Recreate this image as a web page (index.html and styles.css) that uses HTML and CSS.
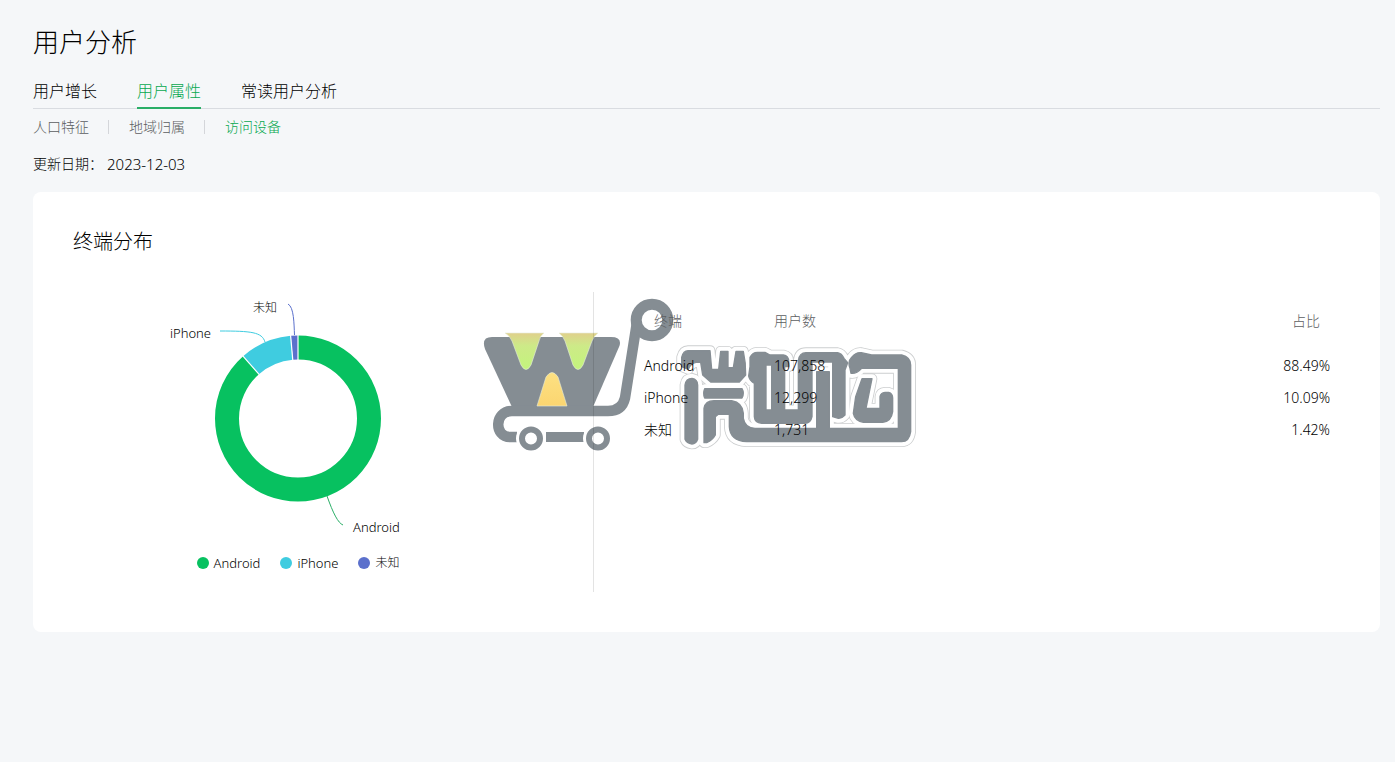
FILE: index.html
```
<!DOCTYPE html>
<html lang="zh-CN">
<head>
<meta charset="utf-8">
<title>用户分析</title>
<link rel="stylesheet" href="styles.css">
</head>
<body>
<main class="page">
  <h1 class="page-title">用户分析</h1>
  <nav class="tabs">
    <a class="tab" href="#growth">用户增长</a>
    <a class="tab tab-active" href="#attributes">用户属性</a>
    <a class="tab" href="#readers">常读用户分析</a>
  </nav>
  <nav class="subtabs">
    <a class="subtab" href="#people">人口特征</a>
    <a class="subtab" href="#region">地域归属</a>
    <a class="subtab subtab-active" href="#device">访问设备</a>
  </nav>
  <p class="updated"><span>更新日期：</span><time class="date" datetime="2023-12-03">2023-12-03</time></p>

  <section class="card">
    <h2 class="card-title">终端分布</h2>
    <div class="card-body">
      <svg class="watermark" viewBox="480 290 440 170" aria-hidden="true">
        <defs>
          <linearGradient id="lime" x1="0" y1="0" x2="0" y2="1">
            <stop offset="0" stop-color="#e0d08c"/><stop offset=".35" stop-color="#cdea88"/><stop offset="1" stop-color="#c3f47c"/>
          </linearGradient>
          <linearGradient id="amber" x1="0" y1="0" x2="0" y2="1">
            <stop offset="0" stop-color="#fde182"/><stop offset="1" stop-color="#fbd571"/>
          </linearGradient>
          <g id="mark" stroke-linejoin="round">
            <path d="M65 200V172Q70 152 84 152H150L155 208H176L182 154H204V203H220L228 154H250Q258 190 257 225L238 246H152L128 225L122 187H108Q92 190 85 208Z"/>
            <path d="M134 266H246Q254 280 246 294H134Q128 280 134 266Z"/>
            <path d="M75 255Q78 235 96 235Q113 238 113 255V418Q108 432 96 432Q80 430 75 418Z"/>
            <path fill-rule="evenodd" d="M132 428V325Q136 302 162 302H215Q248 308 250 340V355Q255 384 285 385H470V215H508V385H715V205H605Q590 222 573 220L570 205Q562 185 575 172Q588 156 604 158L635 165H725Q752 172 752 195V395Q748 425 725 425H260Q210 422 208 380V343H175L166 350V405Q158 420 140 428Z"/>
            <path fill-rule="evenodd" d="M270 200V172Q278 157 292 157H315L330 165H370Q386 168 386 184V200H374V330H415V182Q418 158 438 158H533Q545 160 552 175L563 188L555 210V345Q545 356 535 355L518 350V186H456V350Q452 370 435 370H305Q284 368 283 350V250Q268 242 266 228Z M318 195H335V330H318Z"/>
            <path d="M606 236H636L618 325H660V290Q662 278 675 277H686Q698 280 698 294V335Q694 365 668 367H610Q584 362 580 340L587 290Z"/>
          </g>
        </defs>
        <g fill="#858d93">
          <path d="M492 337H611Q623 337 619 347L593 407H512L485 349Q481 337 492 337Z"/>
          <path d="M637 322L625 398Q622 411 608 411H512C494 411 494 437 510 437H517" fill="none" stroke="#858d93" stroke-width="10.5"/>
          <circle cx="652" cy="320" r="15.8" fill="#fff" stroke="#858d93" stroke-width="11"/>
          <path d="M546 432H584V442H546Z"/>
          <circle cx="531" cy="438.5" r="15" fill="#fff"/>
          <circle cx="598" cy="438.5" r="15" fill="#fff"/>
          <circle cx="531" cy="438.5" r="9" fill="#fff" stroke="#858d93" stroke-width="6"/>
          <circle cx="598" cy="438.5" r="9" fill="#fff" stroke="#858d93" stroke-width="6"/>
        </g>
        <g stroke="#e6ecdc" stroke-width=".6">
          <path d="M505 333H544Q540 336 539 341L531 365Q526 374 521 365L512 341Q510 336 505 333Z" fill="url(#lime)"/>
          <path d="M559 333H598Q594 336 592 341L583 365Q578 374 573 365L565 341Q563 336 559 333Z" fill="url(#lime)"/>
          <path d="M537 406L546 377Q552 368 558 377L567 406Z" fill="url(#amber)"/>
        </g>
        <g transform="translate(660 300) scale(.33333)">
          <use href="#mark" fill="#cccecf" stroke="#cccecf" stroke-width="32"/>
          <use href="#mark" fill="#fff" stroke="#fff" stroke-width="27"/>
          <use href="#mark" fill="#858d93" stroke="#858d93" stroke-width="4"/>
        </g>
      </svg>

      <div class="chart-panel">
        <div class="chart">
          <svg class="donut" viewBox="0 0 450 252" role="img" aria-label="终端分布">
            <g transform="rotate(-90 225 126.5)">
              <circle class="slice slice-android" cx="225" cy="126.5" r="71" pathLength="100"/>
              <circle class="slice slice-iphone" cx="225" cy="126.5" r="71" pathLength="100"/>
              <circle class="slice slice-unknown" cx="225" cy="126.5" r="71" pathLength="100"/>
            </g>
            <g stroke="#fff" stroke-width="1.2">
              <path d="M225 42V69"/>
              <path d="M225 42V69" transform="rotate(-5.1 225 126.5)"/>
              <path d="M225 42V69" transform="rotate(-41.4 225 126.5)"/>
            </g>
            <g fill="none">
              <path stroke="#5b70cc" d="M215 12C221 15 221 32 221.5 43"/>
              <path stroke="#3fcce0" d="M147 39C178 39 189 40 192 50"/>
              <path stroke="#2aae67" d="M254 204C260 221 265 231 270 233"/>
            </g>
            <text class="chart-label label-cjk" x="204" y="20" text-anchor="end">未知</text>
            <text class="chart-label" x="138" y="46" text-anchor="end">iPhone</text>
            <text class="chart-label" x="280" y="240">Android</text>
          </svg>
          <ul class="legend">
            <li class="legend-item"><i class="dot dot-android"></i>Android</li>
            <li class="legend-item"><i class="dot dot-iphone"></i>iPhone</li>
            <li class="legend-item label-cjk"><i class="dot dot-unknown"></i>未知</li>
          </ul>
        </div>
      </div>

      <div class="table-panel">
        <table class="devices">
          <thead>
            <tr><th class="name" scope="col">终端</th><th scope="col">用户数</th><th class="share" scope="col">占比</th></tr>
          </thead>
          <tbody>
            <tr><td>Android</td><td>107,858</td><td class="share">88.49%</td></tr>
            <tr><td>iPhone</td><td>12,299</td><td class="share">10.09%</td></tr>
            <tr><td>未知</td><td>1,731</td><td class="share">1.42%</td></tr>
          </tbody>
        </table>
      </div>
    </div>
  </section>
</main>
</body>
</html>
```
FILE: styles.css
```
* {
  box-sizing: border-box;
}

body {
  margin: 0;
  background: #f5f7f9;
  color: #000;
  font-family: "Noto Sans", "Noto Sans CJK SC", sans-serif;
  font-size: 14px;
  font-weight: 300;
  line-height: 20px;
}

.page {
  padding: 24px 15px 24px 33px;
}

.page-title {
  margin: 0;
  font-size: 26px;
  font-weight: 300;
  line-height: 36px;
}

.tabs {
  display: flex;
  gap: 40px;
  margin-top: 14px;
  border-bottom: 1px solid #d9dce1;
}

.tab {
  margin-bottom: -1px;
  padding: 6px 0 4px;
  border-bottom: 2px solid transparent;
  color: #000;
  font-size: 16px;
  line-height: 23px;
  text-decoration: none;
}

.tab-active {
  border-color: #2aae67;
  color: #07a850;
}

.subtabs {
  display: flex;
  margin-top: 8px;
}

.subtab {
  display: flex;
  align-items: center;
  color: #5c5e61;
  text-decoration: none;
}

.subtab + .subtab::before {
  width: 1px;
  height: 14px;
  margin: 0 20px 0 19px;
  background: #d4d6da;
  content: "";
}

.subtab-active {
  color: #07a850;
}

.updated {
  display: flex;
  gap: 4px;
  margin: 17px 0 18px;
}

.date {
  font-size: 15px;
}

.card {
  padding: 36px 40px 40px;
  border-radius: 8px;
  background: #fff;
}

.card-title {
  margin: 0 0 36px;
  font-size: 20px;
  font-weight: 300;
  line-height: 28px;
}

.card-body {
  position: relative;
  z-index: 0;
  display: flex;
}

.watermark {
  position: absolute;
  z-index: -1;
  top: -2px;
  left: 407px;
  width: 440px;
  height: 170px;
}

.chart-panel {
  flex: 0 0 521px;
  border-right: 1px solid rgba(0, 0, 0, .11);
}

.chart {
  width: 450px;
  height: 300px;
}

.donut {
  display: block;
  width: 100%;
}

.slice {
  fill: none;
  stroke-width: 24;
}

.slice-android {
  stroke: #07c160;
  stroke-dasharray: 88.49 200;
}

.slice-iphone {
  stroke: #3fcce0;
  stroke-dasharray: 0 88.49 10.09 200;
}

.slice-unknown {
  stroke: #5b70cc;
  stroke-dasharray: 0 98.58 1.42 200;
}

.chart-label {
  fill: #000;
  font-size: 13px;
}

.legend {
  display: flex;
  justify-content: center;
  gap: 20px;
  margin: 9px 0 0;
  padding: 0;
  font-size: 13px;
  list-style: none;
}

.legend-item {
  display: flex;
  align-items: center;
  gap: 5px;
}

.label-cjk {
  font-size: 12px;
}

.dot {
  width: 12px;
  height: 12px;
  border-radius: 50%;
}

.dot-android {
  background: #07c160;
}

.dot-iphone {
  background: #3fcce0;
}

.dot-unknown {
  background: #5b70cc;
}

.table-panel {
  flex: 1;
  padding: 0 10px 0 50px;
}

.devices {
  width: 100%;
  border-collapse: collapse;
  table-layout: fixed;
}

.devices th {
  height: 58px;
  padding: 0;
  color: #5c5e61;
  font-weight: 300;
  text-align: left;
}

.devices td {
  height: 32px;
  padding: 0;
}

.devices .name {
  width: 130px;
  padding-left: 10px;
}

.devices .share {
  text-align: right;
}

.devices th.share {
  padding-right: 10px;
}
```
